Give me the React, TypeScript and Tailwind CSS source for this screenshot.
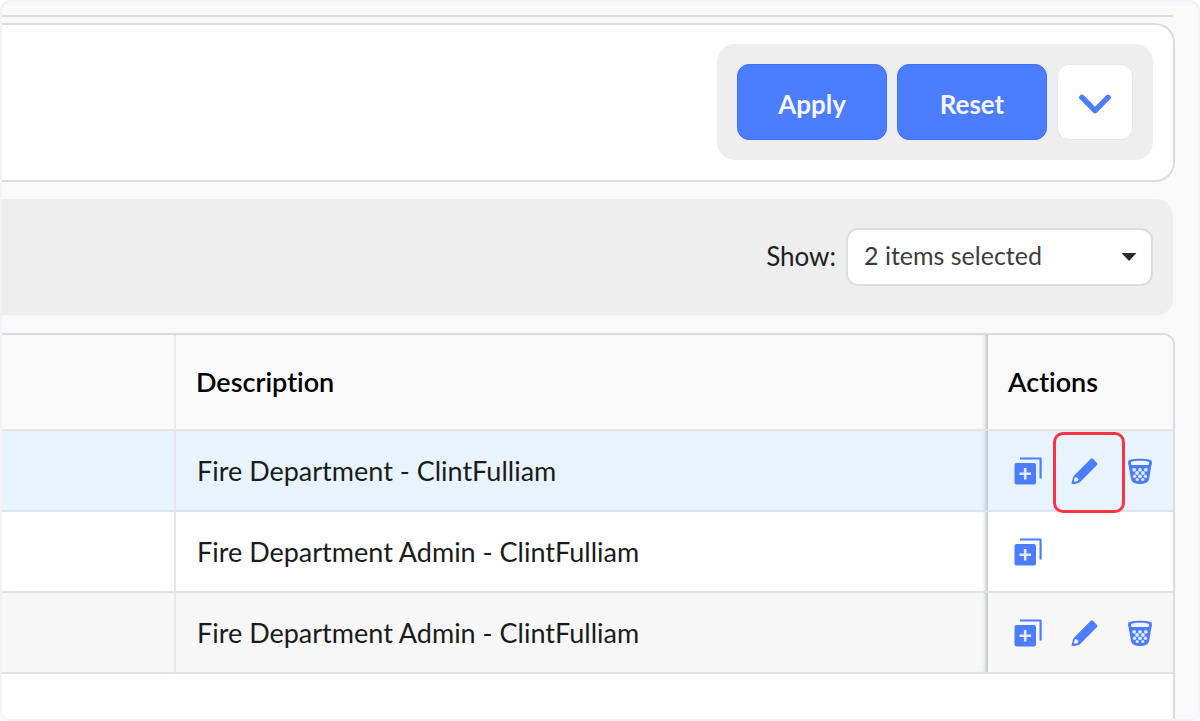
import React from "react";

type Row = { description: string; editable: boolean; highlightEdit?: boolean; tone: string };

const rows: Row[] = [
  { description: "Fire Department - ClintFulliam", editable: true, highlightEdit: true, tone: "bg-[#e7f4fe]" },
  { description: "Fire Department Admin - ClintFulliam", editable: false, tone: "bg-white" },
  { description: "Fire Department Admin - ClintFulliam", editable: true, tone: "bg-[#f7f7f7]" },
];

function DuplicateIcon() {
  return (
    <svg viewBox="0 0 28 28" className="size-7" aria-hidden="true">
      <path d="M6 0.500h20.500a1.200 1.200 0 0 1 1.200 1.200V21.500h-2.200V2.500H6z" fill="#4d7dff" />
      <rect x="0.500" y="6" width="21.500" height="21.500" rx="2" fill="#4d7dff" />
      <path d="M11.200 11v11.500M5.500 16.800H17" stroke="#e3ebff" strokeWidth="2.600" fill="none" />
    </svg>
  );
}

function PencilIcon() {
  return (
    <svg viewBox="0 0 28 28" className="size-7" aria-hidden="true">
      <path
        fillRule="evenodd"
        d="M20.600 2a1.800 1.800 0 0 1 2.600 0l3.600 3.700a1.800 1.800 0 0 1 0 2.600L10.400 24.700a5 5 0 0 1-2 1.300l-5 1.200a1.400 1.400 0 0 1-1.700-1.700l1.400-5a5 5 0 0 1 1.300-2.200zM4.900 20.300 3.800 24.300a3.800 3.800 0 0 0 4.700-1.900 3.200 3.200 0 0 0-3.600-2.100z"
        fill="#4d7dff"
      />
    </svg>
  );
}

function TrashIcon() {
  return (
    <svg viewBox="0 0 28 28" className="size-7" aria-hidden="true">
      <path
        d="M2 4.800C2 2.600 8 1.800 14 1.800s12 .8 12 3c0 1.600-.3 3.200-.8 4.800l-2 12.200C22.500 25.600 19 27 14 27s-8.500-1.400-9-5.200L2.800 9.600C2.300 8 2 6.400 2 4.800z"
        fill="#4d7dff"
      />
      <path d="M5 5C7 4.100 10 3.800 14 3.800s7 .3 9 1.200c.2 1.100 0 2.100-.7 2.900H5.700C5 7.100 4.800 6.100 5 5z" fill="#f0f7ff" />
      <g fill="#dbe8ff">
        <circle cx="8.200" cy="12.800" r="1.900" />
        <circle cx="14" cy="12.800" r="1.900" />
        <circle cx="19.800" cy="12.800" r="1.900" />
        <circle cx="11.100" cy="16" r="1.900" />
        <circle cx="16.900" cy="16" r="1.900" />
        <circle cx="8.600" cy="19.300" r="1.700" />
        <circle cx="14" cy="19.300" r="1.900" />
        <circle cx="19.400" cy="19.300" r="1.700" />
        <circle cx="11.200" cy="22.500" r="1.600" />
        <circle cx="16.800" cy="22.500" r="1.600" />
      </g>
    </svg>
  );
}

function FilterPanel() {
  return (
    <section className="-mr-0.5 mt-1.5 flex justify-end rounded-r-[20px] border-2 border-l-0 border-[#d9dbdc] bg-white pb-5 pr-5 pt-[19px]">
      <div className="flex items-center gap-2.5 rounded-[18px] bg-[#eeeeee] p-5">
        <button
          type="button"
          className="h-[76px] w-[150px] rounded-xl border border-[#3c70fb] bg-[#4d7dff] pt-1 text-[26px] font-bold text-[#f3f6ff]"
        >
          Apply
        </button>
        <button
          type="button"
          className="h-[76px] w-[150px] rounded-xl border border-[#3c70fb] bg-[#4d7dff] pt-1 text-[26px] font-bold text-[#f3f6ff]"
        >
          Reset
        </button>
        <button
          type="button"
          aria-label="More filter options"
          className="flex h-[76px] w-[76px] items-center justify-center rounded-xl border border-[#e6e7ef] bg-white pt-1"
        >
          <svg viewBox="0 0 32 20" className="h-5 w-8" aria-hidden="true">
            <path d="M3 3.400 16 16.600 29 3.400" fill="none" stroke="#4d7dff" strokeWidth="5.600" strokeLinecap="round" strokeLinejoin="round" />
          </svg>
        </button>
      </div>
    </section>
  );
}

function Toolbar() {
  return (
    <div className="mt-[17px] flex items-center justify-end gap-2.5 rounded-r-2xl bg-[#eeeeee] py-[29px] pr-5 text-[26px] text-[#1f1f1f]">
      <label htmlFor="show-items" className="pb-0.5">
        Show:
      </label>
      <div className="relative w-[307px]">
        <select
          id="show-items"
          className="h-[58px] w-full appearance-none rounded-xl border-2 border-[#dcdddd] bg-white pb-0.5 pl-4 pr-12 text-[25px] text-[#3c3c3c]"
        >
          <option>2 items selected</option>
        </select>
        <svg viewBox="0 0 16 8" className="pointer-events-none absolute right-4 top-[25px] h-2 w-4" aria-hidden="true">
          <path d="M0.500 0h15L8 8z" fill="#2b2b2b" />
        </svg>
      </div>
    </div>
  );
}

function ItemsTable() {
  return (
    <div className="-mr-0.5 mt-[18px] grow overflow-hidden rounded-tr-xl border-2 border-b-0 border-l-0 border-[#d8dcdf] bg-white">
      <table className="w-full table-fixed border-separate border-spacing-0 text-left text-[#1b1b1b]">
        <colgroup>
          <col className="w-[174px]" />
          <col />
          <col className="w-[185px]" />
        </colgroup>
        <thead className="bg-[#fafafa] text-[27px] text-black">
          <tr className="h-24">
            <td className="border-b-2 border-r-2 border-b-[#e4e6e8] border-r-[#e8e9ea]" />
            <th
              scope="col"
              className="border-b-2 border-[#e4e6e8] pl-5 font-semibold shadow-[inset_-5px_0_4px_-3px_#b4babf]"
            >
              Description
            </th>
            <th scope="col" className="border-b-2 border-[#e4e6e8] pl-5 font-semibold">
              Actions
            </th>
          </tr>
        </thead>
        <tbody className="text-[27px]">
          {rows.map((row, i) => (
            <tr key={i} className={`h-[81px] ${row.tone}`}>
              <td className="border-b-2 border-r-2 border-b-[#dee2ec] border-r-[#e6e7e9]" />
              <td className="border-b-2 border-[#dee2ec] pl-[21px] pt-0.5 shadow-[inset_-5px_0_4px_-3px_#b4babf]">
                {row.description}
              </td>
              <td className="border-b-2 border-[#dee2ec] pl-[26px]">
                <div className="flex items-center gap-7">
                  <button type="button" aria-label="Duplicate">
                    <DuplicateIcon />
                  </button>
                  {row.editable && (
                    <>
                      <button type="button" aria-label="Edit" className="relative">
                        <PencilIcon />
                        {row.highlightEdit && (
                          <span className="absolute -left-[17px] -top-[25px] h-[81px] w-[72px] rounded-[10px] border-3 border-[#fb3344]" />
                        )}
                      </button>
                      <button type="button" aria-label="Delete">
                        <TrashIcon />
                      </button>
                    </>
                  )}
                </div>
              </td>
            </tr>
          ))}
        </tbody>
      </table>
    </div>
  );
}

export default function App() {
  return (
    <div className="bg-white font-['Lato',sans-serif] [font-variant-ligatures:none]">
      <main className="flex min-h-screen flex-col overflow-hidden rounded-[10px] border-2 border-[#f2f2f8] bg-[#f9f9f9] pr-[25px] pt-[13px]">
        <div className="h-0.5 bg-[#dcdddd]" />
        <FilterPanel />
        <Toolbar />
        <ItemsTable />
      </main>
    </div>
  );
}
